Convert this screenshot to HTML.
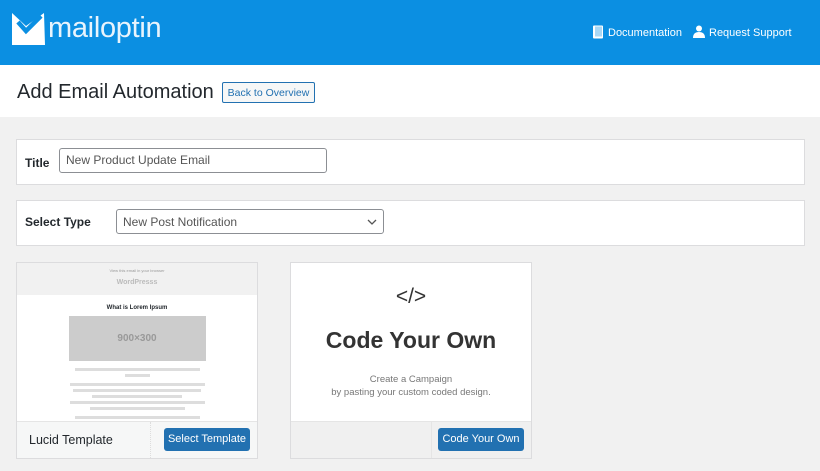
<!DOCTYPE html>
<html><head><meta charset="utf-8"><style>
*{box-sizing:border-box;margin:0;padding:0}
body{width:820px;height:471px;overflow:hidden;background:#f1f1f1;font-family:"Liberation Sans",sans-serif;color:#23282d;position:relative}
.hdr{position:absolute;left:0;top:0;width:820px;height:65px;background:#0b8fe2}
.logo{position:absolute;left:11px;top:12px}
.brand{position:absolute;left:48px;top:12px;font-size:29px;color:#e8f4fd;font-weight:normal;letter-spacing:-0.3px}
.nav{position:absolute;top:25px;color:#fff;font-size:11px}
.bar{position:absolute;left:0;top:65px;width:820px;height:52px;background:#fff}
h1{position:absolute;left:17px;top:81px;font-size:20px;font-weight:normal;color:#23282d}
.back{position:absolute;left:222px;top:82px;width:93px;height:21px;border:1px solid #2271b1;background:#f6f7f7;color:#2271b1;font-size:10.5px;text-align:center;line-height:20px;border-radius:2px}
.box{position:absolute;left:16px;width:789px;background:#fff;border:1px solid #dcdcde}
.lbl{position:absolute;left:8px;font-size:12px;font-weight:bold;color:#23282d}
.inp{position:absolute;border:1px solid #8c8f94;border-radius:3px;background:#fff;font-size:12px;color:#555;padding-left:6px}
.card{position:absolute;top:262px;width:242px;height:197px;background:#fff;border:1px solid #dcdcde}
.foot{position:absolute;left:0;bottom:0;width:240px;height:37px;background:#f6f7f7;border-top:1px solid #e5e5e5}
.btn{position:absolute;background:#2271b1;color:#fff;font-size:11px;text-align:center;border-radius:3px;height:23px;line-height:23px}
.ln{height:3px;background:#ddd;margin:3px auto 0}
</style></head><body>
<div class="hdr">
<svg class="logo" width="36" height="34" viewBox="0 0 36 34"><path d="M1 1 L15 14 L33 1 L34 33 L1 33 Z" fill="#fff"/><path d="M7 10 L15 19 L30 4" stroke="#0b8fe2" stroke-width="4.5" fill="none"/></svg>
<div class="brand">mailoptin</div>
<div class="nav" style="left:592px"><svg width="12" height="14" viewBox="0 0 12 14" style="vertical-align:-3px;margin-right:4px"><rect x="1" y="0.5" width="10" height="13" rx="1" fill="#fff"/><rect x="3" y="1.5" width="7" height="10" fill="#0b8fe2" opacity=".35"/></svg>Documentation</div>
<div class="nav" style="left:693px"><svg width="12" height="13" viewBox="0 0 12 13" style="vertical-align:-2px;margin-right:4px"><circle cx="6" cy="3.5" r="3" fill="#fff"/><path d="M0 13 Q0 7 6 7 Q12 7 12 13 Z" fill="#fff"/></svg>Request Support</div>
</div>
<div class="bar"></div>
<h1>Add Email Automation</h1>
<div class="back">Back to Overview</div>
<div class="box" style="top:139px;height:46px"><div class="lbl" style="top:16px">Title</div><div class="inp" style="left:42px;top:8px;width:268px;height:25px;line-height:23px">New Product Update Email</div></div>
<div class="box" style="top:200px;height:46px"><div class="lbl" style="top:14px">Select Type</div><div class="inp" style="left:99px;top:8px;width:268px;height:25px;line-height:24px">New Post Notification<svg width="10" height="6" viewBox="0 0 10 6" style="position:absolute;right:6px;top:9px"><path d="M1 1 L5 5 L9 1" stroke="#555" stroke-width="1.3" fill="none"/></svg></div></div>
<div class="card" style="left:16px">
<div style="height:32px;background:#f1f1f1;text-align:center;font-size:4px;color:#999;padding-top:5px">View this email in your browser<div style="font-size:7px;font-weight:bold;color:#bbb;margin-top:6px">WordPresss</div></div>
<div style="text-align:center;font-size:6px;font-weight:bold;margin-top:10px">What is Lorem Ipsum</div>
<div style="margin:5px auto 0;width:137px;height:45px;background:#ccc;color:#999;font-size:10px;line-height:45px;text-align:center;font-weight:bold">900×300</div>
<div class="ln" style="width:125px;margin-top:7px"></div><div class="ln" style="width:25px"></div>
<div class="ln" style="width:135px;margin-top:6px"></div><div class="ln" style="width:128px"></div><div class="ln" style="width:90px"></div><div class="ln" style="width:135px"></div><div class="ln" style="width:95px"></div><div class="ln" style="width:125px;margin-top:6px"></div>
<div class="foot"><div style="position:absolute;left:12px;top:11px;font-size:12.5px;color:#23282d">Lucid Template</div><div style="position:absolute;left:133px;top:0;height:36px;border-left:1px dotted #ddd"></div><div class="btn" style="left:147px;top:6px;width:86px">Select Template</div></div>
</div>
<div class="card" style="left:290px">
<div style="position:absolute;width:240px;top:22px;text-align:center;font-size:21px;color:#333">&lt;/&gt;</div>
<div style="position:absolute;width:240px;top:64px;text-align:center;font-size:23px;font-weight:bold;color:#333">Code Your Own</div>
<div style="position:absolute;width:240px;top:110px;text-align:center;font-size:9.5px;color:#777;line-height:13px">Create a Campaign<br>by pasting your custom coded design.</div>
<div class="foot" style="background:#f0f0f0"><div style="position:absolute;left:140px;top:0;height:36px;border-left:1px solid #e5e5e5"></div><div class="btn" style="left:147px;top:6px;width:86px">Code Your Own</div></div>
</div>
</body></html>
